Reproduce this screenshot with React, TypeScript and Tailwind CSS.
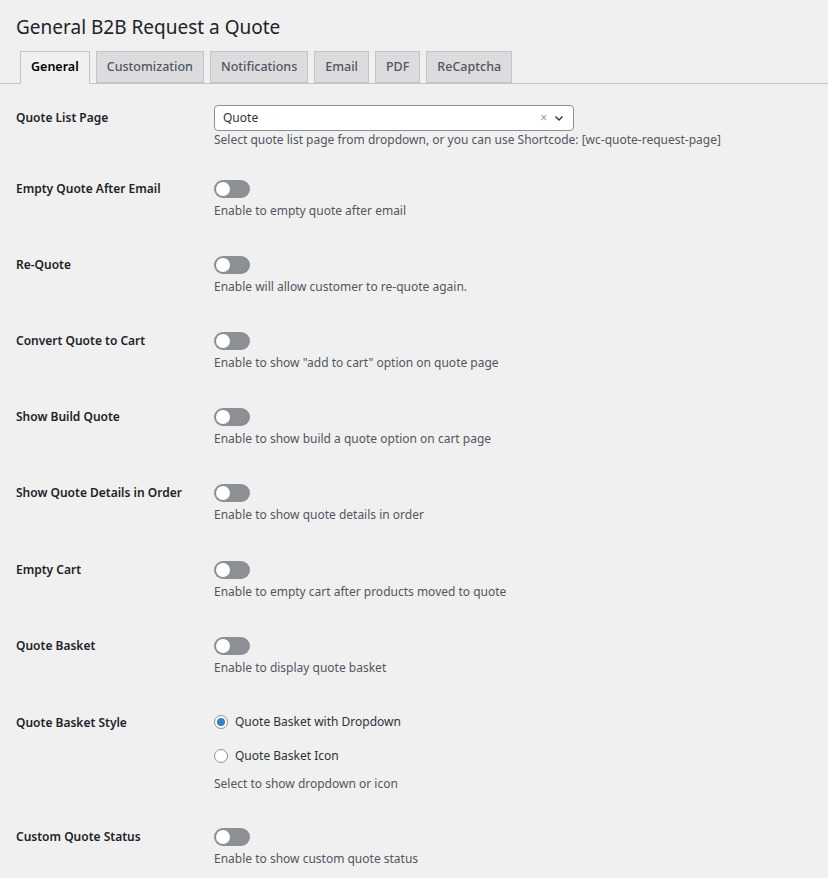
import React from "react";

const Toggle = () => (
  <div className="w-[36px] h-[18px] rounded-full bg-[#8c8f94] relative">
    <div className="absolute left-[2px] top-[2px] w-[14px] h-[14px] rounded-full bg-white" />
  </div>
);

const Row = ({ label, desc, mt }: { label: string; desc: string; mt: string }) => (
  <div className={`flex ${mt}`}>
    <div className="w-[198px] h-[18px] leading-[18px] font-semibold text-[#1d2327]">{label}</div>
    <div>
      <Toggle />
      <div className="mt-[4px] leading-[18px] text-[#50575e]">{desc}</div>
    </div>
  </div>
);

export default function App() {
  const tabs = ["General", "Customization", "Notifications", "Email", "PDF", "ReCaptcha"];
  return (
    <div className="w-[828px] h-[878px] bg-[#f0f0f1] overflow-hidden text-[12px] text-[#3c434a]" style={{ fontFamily: '"Noto Sans", "Open Sans", sans-serif' }}>
      <div className="pl-4 pt-[14px] text-[19px] leading-[26px] text-[#1d2327]">General B2B Request a Quote</div>
      <div className="mt-[12px] pl-[20px] flex gap-[6px] border-b border-[#c3c4c7] h-[32px] items-end">
        {tabs.map((t, i) => (
          <div
            key={t}
            className={`px-[10px] flex items-center border border-[#c3c4c7] text-[12.5px] ${
              i === 0 ? "bg-[#f0f0f1] border-b-[#f0f0f1] text-black font-semibold -mb-px h-[33px]" : "h-[32px] bg-[#dcdcde] text-[#50575e] font-medium"
            }`}
          >
            {t}
          </div>
        ))}
      </div>
      <div className="pl-4">
        <div className="flex mt-[21px]">
          <div className="w-[198px] h-[26px] leading-[26px] font-semibold text-[#1d2327]">Quote List Page</div>
          <div>
            <div className="w-[360px] h-[26px] bg-white border border-[#8c8f94] rounded-[4px] flex items-center px-2 text-[#2c3338]">
              <span className="flex-1">Quote</span>
              <span className="text-[#999] text-[12px] mr-[6px]">×</span>
              <svg width="12" height="12" viewBox="0 0 12 12"><path d="M2.5 4.5L6 8l3.5-3.5" stroke="#2c3338" strokeWidth="1.4" fill="none" /></svg>
            </div>
            <div className="leading-[18px] text-[#50575e]">Select quote list page from dropdown, or you can use Shortcode: [wc-quote-request-page]</div>
          </div>
        </div>
        <Row mt="mt-[31px]" label="Empty Quote After Email" desc="Enable to empty quote after email" />
        <Row mt="mt-[36px]" label="Re-Quote" desc="Enable will allow customer to re-quote again." />
        <Row mt="mt-[36px]" label="Convert Quote to Cart" desc={'Enable to show "add to cart" option on quote page'} />
        <Row mt="mt-[36px]" label="Show Build Quote" desc="Enable to show build a quote option on cart page" />
        <Row mt="mt-[36px]" label="Show Quote Details in Order" desc="Enable to show quote details in order" />
        <Row mt="mt-[37px]" label="Empty Cart" desc="Enable to empty cart after products moved to quote" />
        <Row mt="mt-[36px]" label="Quote Basket" desc="Enable to display quote basket" />
        <div className="flex mt-[36px]">
          <div className="w-[198px] h-[18px] leading-[20px] font-semibold text-[#1d2327]">Quote Basket Style</div>
          <div>
            <div className="flex items-center gap-[7px] h-[18px]">
              <div className="w-[14px] h-[14px] rounded-full border border-[#8c8f94] bg-white flex items-center justify-center">
                <div className="w-[8px] h-[8px] rounded-full bg-[#3582c4]" />
              </div>
              <span className="text-[#2c3338]">Quote Basket with Dropdown</span>
            </div>
            <div className="flex items-center gap-[7px] h-[18px] mt-[16px]">
              <div className="w-[14px] h-[14px] rounded-full border border-[#8c8f94] bg-white" />
              <span className="text-[#2c3338]">Quote Basket Icon</span>
            </div>
            <div className="mt-[10px] leading-[18px] text-[#50575e]">Select to show dropdown or icon</div>
          </div>
        </div>
        <Row mt="mt-[35px]" label="Custom Quote Status" desc="Enable to show custom quote status" />
      </div>
    </div>
  );
}
